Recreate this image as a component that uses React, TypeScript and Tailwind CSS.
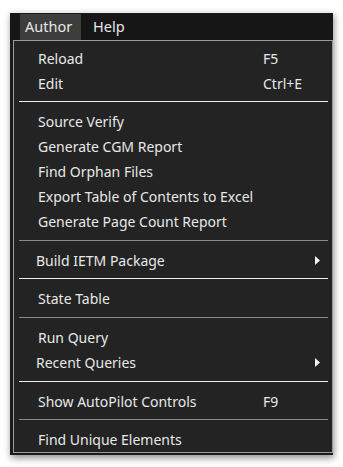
import React from 'react';

type Entry =
  | { kind: 'item'; label: string; shortcut?: string; submenu?: boolean }
  | { kind: 'sep'; bright?: boolean; tall?: boolean };

const entries: Entry[] = [
  { kind: 'item', label: 'Reload', shortcut: 'F5' },
  { kind: 'item', label: 'Edit', shortcut: 'Ctrl+E' },
  { kind: 'sep', bright: true },
  { kind: 'item', label: 'Source Verify' },
  { kind: 'item', label: 'Generate CGM Report' },
  { kind: 'item', label: 'Find Orphan Files' },
  { kind: 'item', label: 'Export Table of Contents to Excel' },
  { kind: 'item', label: 'Generate Page Count Report' },
  { kind: 'sep', tall: true },
  { kind: 'item', label: 'Build IETM Package', submenu: true },
  { kind: 'sep', bright: true },
  { kind: 'item', label: 'State Table' },
  { kind: 'sep', tall: true },
  { kind: 'item', label: 'Run Query' },
  { kind: 'item', label: 'Recent Queries', submenu: true },
  { kind: 'sep', bright: true, tall: true },
  { kind: 'item', label: 'Show AutoPilot Controls', shortcut: 'F9' },
  { kind: 'sep' },
  { kind: 'item', label: 'Find Unique Elements' },
];

const MenuRow: React.FC<{ label: string; shortcut?: string; submenu?: boolean }> = ({ label, shortcut, submenu }) => (
  <div className="h-[25px] flex items-center">
    <div className={`w-[249px] shrink-0 ${submenu ? 'pl-[22px]' : 'pl-[24px]'}`}>{label}</div>
    {shortcut && <div>{shortcut}</div>}
    {submenu && (
      <svg className="ml-auto mr-[12px]" width="5" height="9" viewBox="0 0 5 9">
        <path d="M0 0 L5 4.5 L0 9 Z" fill="#f2f2f2" />
      </svg>
    )}
  </div>
);

export default function App() {
  return (
    <div className="w-[343px] h-[467px] bg-white pt-[12px] pl-[10px] overflow-hidden">
      <div
        className="w-[323px] h-[443px] bg-[#1b1b1b] border-t border-[#ececec] shadow-[1px_3px_7px_rgba(0,0,0,0.45)] text-[#e8e8e8]"
        style={{ fontFamily: '"Noto Sans", "Open Sans", sans-serif' }}
      >
        {/* menu bar */}
        <div className="h-[27px] bg-[#161616] flex items-stretch pl-[10px] text-[14.5px]">
          <div className="mt-[1px] w-[61px] bg-[#3d3d3d] flex items-center pl-[5px]">Author</div>
          <div className="flex items-center pl-[12px]">Help</div>
        </div>

        {/* dropdown */}
        <div className="ml-[3px] w-[320px] border border-[#9b9b9b] bg-[#232323] pt-[5px] text-[14px]">
          {entries.map((e, i) =>
            e.kind === 'sep' ? (
              <div key={i} className={`${e.tall ? 'h-[14px] pt-[6px]' : 'h-[13px] pt-[5px]'} pl-[5px] pr-[4px]`}>
                <div className={`h-[1px] w-full ${e.bright ? 'bg-[#f0f0f0]' : 'bg-[#8a8a8a]'}`} />
              </div>
            ) : (
              <MenuRow key={i} label={e.label} shortcut={e.shortcut} submenu={e.submenu} />
            )
          )}
        </div>
      </div>
    </div>
  );
}
